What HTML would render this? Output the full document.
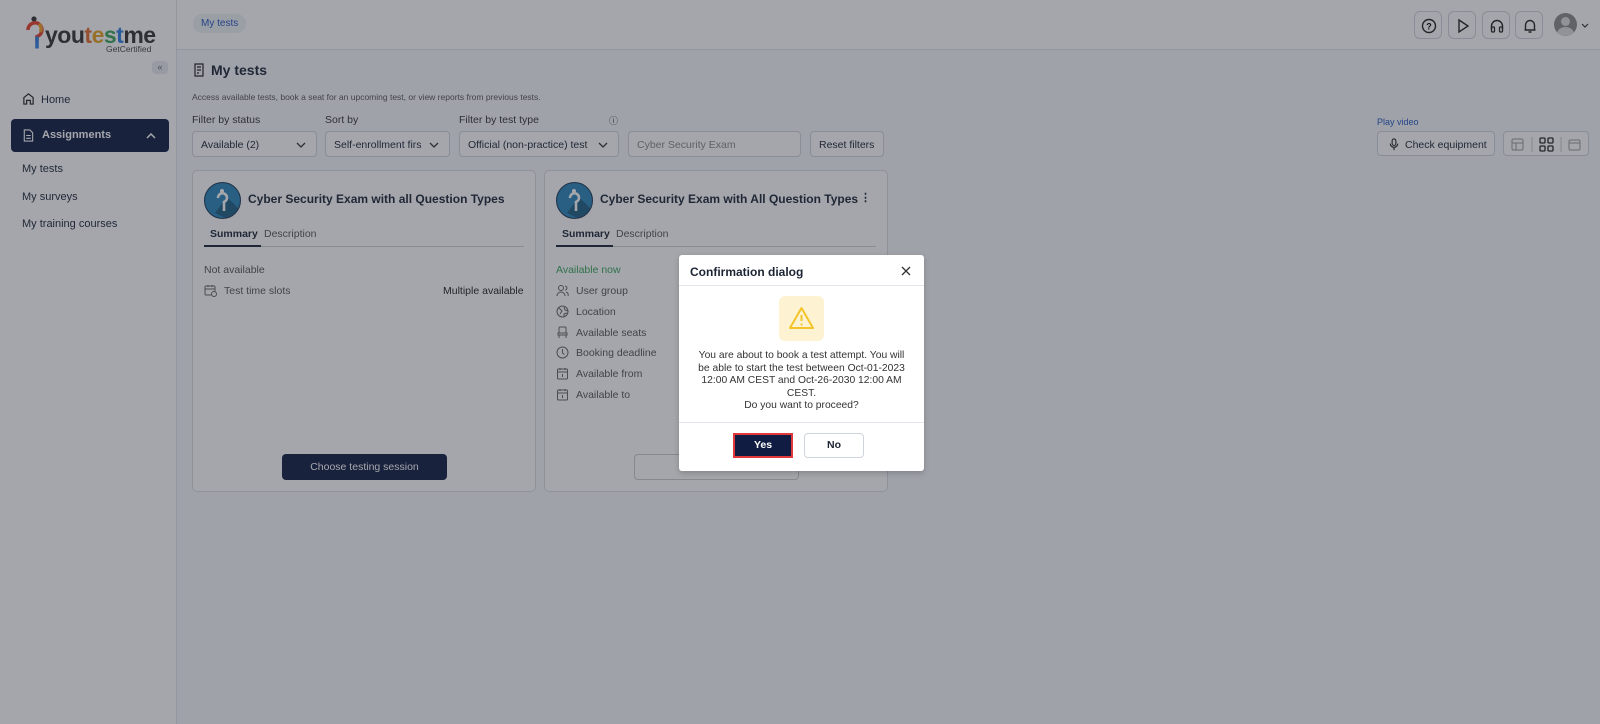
<!DOCTYPE html>
<html><head><meta charset="utf-8"><style>
*{box-sizing:border-box;margin:0;padding:0}
body{width:1600px;height:724px;overflow:hidden;font-family:"Liberation Sans",sans-serif;background:#f7f8fa;position:relative;color:#1b2434;font-size:11px}
.sb{position:absolute;left:0;top:0;width:177px;height:724px;background:#fff;border-right:1px solid #dfe3ea}
.logo{position:absolute;left:25px;top:16px}
.logo .t{position:absolute;left:20px;top:6px;font-size:23px;font-weight:bold;letter-spacing:-0.5px;color:#333;white-space:nowrap}
.logo .g{position:absolute;left:81px;top:28px;font-size:8.5px;color:#444;white-space:nowrap}
.coll{position:absolute;left:152px;top:61px;width:16px;height:13px;background:#e8ebef;border-radius:4px;font-size:9px;color:#666;text-align:center;line-height:13px}
.nav{position:absolute;left:22px;font-size:11px;color:#1b2434}
.asg{position:absolute;left:11px;top:119px;width:158px;height:33px;background:#101c42;border-radius:4px;color:#fff;font-weight:bold;font-size:11px}
.hdr{position:absolute;left:177px;top:0;right:0;height:50px;background:#fff;border-bottom:1px solid #dfe3ea}
.crumb{position:absolute;left:193px;top:14px;padding:4px 8px;background:#eef1f5;border-radius:10px;color:#2457c5;font-size:10px}
.ib{position:absolute;top:11px;width:28px;height:28px;border:1px solid #cfd4dc;border-radius:6px;background:#fff}
.ib svg{position:absolute;left:6px;top:6px}
.sel{position:absolute;top:131px;height:26px;border:1px solid #cfd4dc;border-radius:4px;background:#fff;font-size:10.5px;padding:7px 8px;white-space:nowrap;overflow:hidden}
.lbl{position:absolute;top:114px;font-size:10.5px;color:#333}
.card{position:absolute;top:170px;width:344px;height:322px;background:#fff;border:1px solid #d9dde4;border-radius:5px}
.av{position:absolute;left:11px;top:11px;width:37px;height:37px;border-radius:50%;background:#2a86b8;border:1.5px solid #1d3550;overflow:hidden}
.ct{position:absolute;left:55px;top:21px;font-size:12px;font-weight:bold;white-space:nowrap}
.tabs{position:absolute;left:11px;top:53px;right:11px;height:23px;border-bottom:1px solid #cdd2da;font-size:10.5px}
.row{position:absolute;left:11px;font-size:10.5px;color:#555}
.ic{position:absolute;left:11px}
.ov{position:absolute;inset:0;background:rgba(38,44,56,0.42)}
.dlg{position:absolute;background:#fff;border-radius:3px;box-shadow:0 2px 6px rgba(0,0,0,.2)}
</style></head><body>
<div class="sb">
 <div class="logo"><svg width="20" height="36" viewBox="0 0 20 36"><circle cx="9" cy="3" r="2.6" fill="#333"/><path d="M3 14a7 7 0 1 1 9 6.5v6" stroke="#e9432b" stroke-width="3.5" fill="none"/><path d="M12 20.5v12" stroke="#2f7fe0" stroke-width="3.5"/><path d="M14 8a7 7 0 0 1 1.5 8" stroke="#f2a12a" stroke-width="3.5" fill="none"/></svg>
 <div class="t">you<span style="color:#e26d2d">t</span><span style="color:#e9a220">e</span><span style="color:#3aa55a">s</span><span style="color:#2f7fe0">t</span>me</div><div class="g">GetCertified</div></div>
 <div class="coll">«</div>
 <div class="nav" style="top:92px;left:22px"><svg width="13" height="13" viewBox="0 0 14 14" style="vertical-align:-2px;margin-right:6px"><path d="M2 6l5-4 5 4v7H9V9H5v4H2z" fill="none" stroke="#222" stroke-width="1.3"/></svg>Home</div>
 <div class="asg"><svg width="12" height="13" viewBox="0 0 12 14" style="position:absolute;left:11px;top:10px"><path d="M2 1h6l3 3v9H2z M4 7h5M4 10h5" fill="none" stroke="#fff" stroke-width="1.2"/></svg><span style="position:absolute;left:31px;top:10px">Assignments</span><svg width="10" height="6" viewBox="0 0 10 6" style="position:absolute;right:13px;top:14px"><path d="M1 5l4-4 4 4" fill="none" stroke="#fff" stroke-width="1.5"/></svg></div>
 <div class="nav" style="top:163px">My tests</div>
 <div class="nav" style="top:191px">My surveys</div>
 <div class="nav" style="top:218px">My training courses</div>
</div>
<div class="hdr"></div>
<div class="crumb">My tests</div>
<div class="ib" style="left:1414px"><svg width="16" height="16" viewBox="0 0 16 16"><circle cx="8" cy="8" r="6.5" fill="none" stroke="#222" stroke-width="1.4"/><text x="8" y="11.5" font-size="9" text-anchor="middle" font-weight="bold" font-family="Liberation Sans">?</text></svg></div>
<div class="ib" style="left:1448px"><svg width="16" height="16" viewBox="0 0 16 16"><path d="M4 2l9 6-9 6z" fill="none" stroke="#222" stroke-width="1.4"/></svg></div>
<div class="ib" style="left:1482px"><svg width="16" height="16" viewBox="0 0 16 16"><path d="M2.5 11V8a5.5 5.5 0 0 1 11 0v3" fill="none" stroke="#222" stroke-width="1.4"/><rect x="2.5" y="9" width="3" height="5" rx="1" fill="none" stroke="#222" stroke-width="1.3"/><rect x="10.5" y="9" width="3" height="5" rx="1" fill="none" stroke="#222" stroke-width="1.3"/></svg></div>
<div class="ib" style="left:1515px"><svg width="16" height="16" viewBox="0 0 16 16"><path d="M3.5 12V7a4.5 4.5 0 0 1 9 0v5zM2.5 12h11M6.5 14h3" fill="none" stroke="#222" stroke-width="1.4"/></svg></div>
<div style="position:absolute;left:1554px;top:13px;width:23px;height:23px;border-radius:50%;background:#8a8a8a;overflow:hidden"><div style="position:absolute;left:7px;top:4px;width:9px;height:9px;border-radius:50%;background:#ddd"></div><div style="position:absolute;left:3px;top:14px;width:17px;height:14px;border-radius:50%;background:#ddd"></div></div>
<svg width="8" height="5" viewBox="0 0 8 5" style="position:absolute;left:1581px;top:23px"><path d="M1 1l3 3 3-3" fill="none" stroke="#333" stroke-width="1.2"/></svg>

<div style="position:absolute;left:193px;top:62px;font-size:14px;font-weight:bold"><svg width="12" height="14" viewBox="0 0 12 14" style="vertical-align:-2px;margin-right:6px"><path d="M2 1h8v12H2z M4 4h4M4 7h4M4 10h2" fill="none" stroke="#222" stroke-width="1.2"/></svg>My tests</div>
<div style="position:absolute;left:192px;top:92px;font-size:8.5px;color:#555">Access available tests, book a seat for an upcoming test, or view reports from previous tests.</div>
<div class="lbl" style="left:192px">Filter by status</div>
<div class="lbl" style="left:325px">Sort by</div>
<div class="lbl" style="left:459px">Filter by test type</div>
<div class="lbl" style="left:609px;font-size:9px">&#9432;</div>
<div class="sel" style="left:192px;width:125px">Available (2)<svg width="10" height="6" viewBox="0 0 10 6" style="position:absolute;right:10px;top:10px"><path d="M1 1l4 4 4-4" fill="none" stroke="#333" stroke-width="1.3"/></svg></div>
<div class="sel" style="left:325px;width:125px">Self-enrollment firs<span style="position:absolute;right:0;top:0;width:26px;height:24px;background:#fff"><svg width="10" height="6" viewBox="0 0 10 6" style="position:absolute;right:10px;top:10px"><path d="M1 1l4 4 4-4" fill="none" stroke="#333" stroke-width="1.3"/></svg></span></div>
<div class="sel" style="left:459px;width:160px">Official (non-practice) test<span style="position:absolute;right:0;top:0;width:26px;height:24px;background:#fff"><svg width="10" height="6" viewBox="0 0 10 6" style="position:absolute;right:10px;top:10px"><path d="M1 1l4 4 4-4" fill="none" stroke="#333" stroke-width="1.3"/></svg></span></div>
<div class="sel" style="left:628px;width:173px;color:#888">Cyber Security Exam</div>
<div class="sel" style="left:810px;width:74px">Reset filters</div>
<div style="position:absolute;left:1377px;top:117px;font-size:9px;color:#2457c5">Play video</div>
<div class="sel" style="left:1377px;width:118px;height:25px;padding-left:27px">Check equipment<svg width="12" height="13" viewBox="0 0 12 14" style="position:absolute;left:10px;top:6px"><rect x="4" y="1" width="4" height="7" rx="2" fill="none" stroke="#222" stroke-width="1.2"/><path d="M2 6a4 4 0 0 0 8 0M6 10v3" fill="none" stroke="#222" stroke-width="1.2"/></svg></div>
<div class="sel" style="left:1503px;width:86px;height:25px"><svg width="86" height="25" viewBox="0 0 86 25" style="position:absolute;left:0;top:0"><rect x="8" y="7" width="11" height="11" rx="1.5" fill="none" stroke="#999"/><path d="M8 11h11M12 11v7" stroke="#999"/><path d="M28 5v15M57 5v15" stroke="#ccc"/><rect x="36" y="6" width="5" height="5" rx="1" fill="none" stroke="#222" stroke-width="1.3"/><rect x="44" y="6" width="5" height="5" rx="1" fill="none" stroke="#222" stroke-width="1.3"/><rect x="36" y="14" width="5" height="5" rx="1" fill="none" stroke="#222" stroke-width="1.3"/><rect x="44" y="14" width="5" height="5" rx="1" fill="none" stroke="#222" stroke-width="1.3"/><rect x="65" y="8" width="11" height="10" rx="1.5" fill="none" stroke="#999"/><path d="M65 11h11" stroke="#999"/></svg></div>

<div class="card" style="left:192px">
 <div class="av"><svg width="37" height="37" viewBox="0 0 37 37"><path d="M22 14L40 32 30 40 10 30z" fill="#1f5f86"/><circle cx="17" cy="8" r="2" fill="#fff"/><path d="M13 15a4.5 4.5 0 1 1 6 4v9" stroke="#fff" stroke-width="2.6" fill="none"/></svg></div><div class="ct">Cyber Security Exam with all Question Types</div>
 <div class="tabs"><span style="position:absolute;left:6px;top:4px;font-weight:bold">Summary</span><span style="position:absolute;left:60px;top:4px;color:#555">Description</span><div style="position:absolute;left:0;bottom:-1px;width:57px;height:2px;background:#1b2434"></div></div>
 <div class="row" style="top:93px">Not available</div>
 <svg class="ic" style="top:113px" width="13" height="13" viewBox="0 0 13 13"><rect x="1" y="2" width="10" height="9" rx="1" fill="none" stroke="#666"/><path d="M1 5h10M4 1v2M8 1v2" stroke="#666"/><circle cx="10" cy="10" r="2.5" fill="#fff" stroke="#666"/></svg>
 <div class="row" style="top:114px;left:31px">Test time slots</div>
 <div class="row" style="top:114px;left:250px;color:#222">Multiple available</div>
 <div style="position:absolute;left:89px;top:283px;width:165px;height:26px;background:#101c42;border-radius:4px;color:#fff;font-size:10.5px;text-align:center;line-height:26px">Choose testing session</div>
</div>
<div class="card" style="left:544px">
 <div class="av"><svg width="37" height="37" viewBox="0 0 37 37"><path d="M22 14L40 32 30 40 10 30z" fill="#1f5f86"/><circle cx="17" cy="8" r="2" fill="#fff"/><path d="M13 15a4.5 4.5 0 1 1 6 4v9" stroke="#fff" stroke-width="2.6" fill="none"/></svg></div><div class="ct">Cyber Security Exam with All Question Types</div>
 <div style="position:absolute;right:16px;top:20px;font-weight:bold">&#8942;</div>
 <div class="tabs"><span style="position:absolute;left:6px;top:4px;font-weight:bold">Summary</span><span style="position:absolute;left:60px;top:4px;color:#555">Description</span><div style="position:absolute;left:0;bottom:-1px;width:57px;height:2px;background:#1b2434"></div></div>
 <div class="row" style="top:93px;color:#3aa55a">Available now</div>
 <svg class="ic" style="top:113px" width="13" height="13" viewBox="0 0 13 13"><circle cx="5" cy="4" r="2.5" fill="none" stroke="#666"/><path d="M1 12a4 4 0 0 1 8 0M9 2a2 2 0 0 1 0 4M10 8a3 3 0 0 1 2 4" fill="none" stroke="#666"/></svg>
 <svg class="ic" style="top:134px" width="13" height="13" viewBox="0 0 13 13"><circle cx="6.5" cy="6.5" r="5.5" fill="none" stroke="#666"/><path d="M3 3l3 3-2 3M8 2l1 3 3 1M8 12l0-3 3-1" fill="none" stroke="#666"/></svg>
 <svg class="ic" style="top:155px" width="13" height="13" viewBox="0 0 13 13"><rect x="3" y="1" width="7" height="6" rx="1" fill="none" stroke="#666"/><path d="M2 7h9v2H2zM3 9v3M10 9v3" fill="none" stroke="#666"/></svg>
 <svg class="ic" style="top:175px" width="13" height="13" viewBox="0 0 13 13"><circle cx="6.5" cy="6.5" r="5.5" fill="none" stroke="#666"/><path d="M6.5 3v4l2 1.5" fill="none" stroke="#666"/></svg>
 <svg class="ic" style="top:196px" width="13" height="13" viewBox="0 0 13 13"><rect x="1.5" y="2" width="10" height="10" rx="1" fill="none" stroke="#666"/><path d="M1.5 5h10M4 1v2M9 1v2M6.5 7v3" stroke="#666"/></svg>
 <svg class="ic" style="top:217px" width="13" height="13" viewBox="0 0 13 13"><rect x="1.5" y="2" width="10" height="10" rx="1" fill="none" stroke="#666"/><path d="M1.5 5h10M4 1v2M9 1v2M6.5 7v3" stroke="#666"/></svg>
 <div class="row" style="top:114px;left:31px">User group</div>
 <div class="row" style="top:135px;left:31px">Location</div>
 <div class="row" style="top:156px;left:31px">Available seats</div>
 <div class="row" style="top:176px;left:31px">Booking deadline</div>
 <div class="row" style="top:197px;left:31px">Available from</div>
 <div class="row" style="top:218px;left:31px">Available to</div>
 <div style="position:absolute;left:89px;top:283px;width:165px;height:26px;border:1px solid #ccc;border-radius:4px"></div>
</div>
<div class="ov"></div>
<div class="dlg" style="left:679px;top:255px;width:245px;height:216px">
 <div style="position:absolute;left:11px;top:10px;font-size:12px;font-weight:bold">Confirmation dialog</div>
 <svg width="10" height="10" viewBox="0 0 10 10" style="position:absolute;right:13px;top:11px"><path d="M1 1l8 8M9 1l-8 8" stroke="#333" stroke-width="1.3"/></svg>
 <div style="position:absolute;left:0;right:0;top:30px;border-top:1px solid #e2e5ea"></div>
 <div style="position:absolute;left:100px;top:41px;width:45px;height:45px;background:#fdf3d2;border-radius:6px"><svg width="27" height="24" viewBox="0 0 27 24" style="position:absolute;left:9px;top:10px"><path d="M13.5 2L25 22H2z" fill="none" stroke="#f3c42a" stroke-width="2" stroke-linejoin="round"/><path d="M13.5 9v6" stroke="#f3c42a" stroke-width="2"/><circle cx="13.5" cy="18.5" r="1.1" fill="#f3c42a"/></svg></div>
 <div style="position:absolute;left:14px;right:14px;top:95px;text-align:center;font-size:10.3px;line-height:12.5px;color:#333">You are about to book a test attempt. You will be able to start the test between Oct-01-2023 12:00 AM CEST and Oct-26-2030 12:00 AM CEST.<br>Do you want to proceed?</div>
 <div style="position:absolute;left:0;right:0;top:167px;border-top:1px solid #e2e5ea"></div>
 <div style="position:absolute;left:54px;top:178px;width:60px;height:25px;background:#101c42;border:2px solid #e0383b;color:#fff;font-weight:bold;font-size:10.5px;text-align:center;line-height:21px">Yes</div>
 <div style="position:absolute;left:125px;top:178px;width:60px;height:25px;border:1px solid #cfd4dc;border-radius:4px;font-weight:bold;font-size:10.5px;text-align:center;line-height:23px">No</div>
</div>
</body></html>
